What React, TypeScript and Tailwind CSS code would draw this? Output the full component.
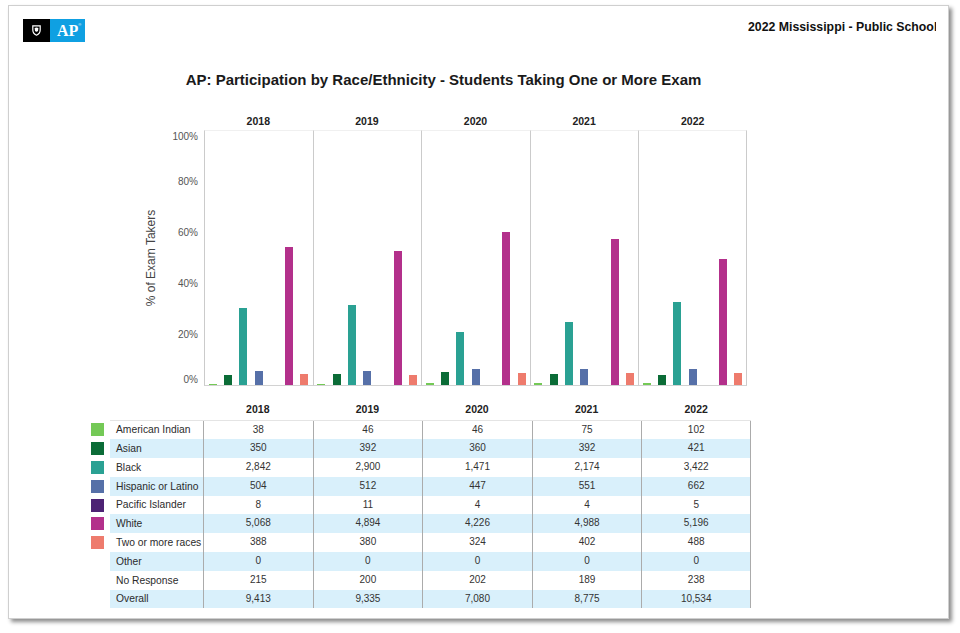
import React from "react";

const years = ["2018", "2019", "2020", "2021", "2022"];

const groups = [
  { name: "American Indian", bar: "bg-[#74c956]", values: [38, 46, 46, 75, 102] },
  { name: "Asian", bar: "bg-[#0b6c37]", values: [350, 392, 360, 392, 421] },
  { name: "Black", bar: "bg-[#2aa193]", values: [2842, 2900, 1471, 2174, 3422] },
  { name: "Hispanic or Latino", bar: "bg-[#5670a8]", values: [504, 512, 447, 551, 662] },
  { name: "Pacific Islander", bar: "bg-[#4d2274]", values: [8, 11, 4, 4, 5] },
  { name: "White", bar: "bg-[#b3308b]", values: [5068, 4894, 4226, 4988, 5196] },
  { name: "Two or more races", bar: "bg-[#ee7b6d]", values: [388, 380, 324, 402, 488] },
];

const otherRows = [
  { name: "Other", values: [0, 0, 0, 0, 0] },
  { name: "No Response", values: [215, 200, 202, 189, 238] },
];

const overall = [9413, 9335, 7080, 8775, 10534];

const rows = [...groups, ...otherRows, { name: "Overall", values: overall }];

const PLOT_H = 256;

function Logo() {
  return (
    <div className="flex h-[23px]">
      <div className="flex w-[27px] items-center justify-center bg-black">
        <svg width="9" height="11" viewBox="0 0 9 11">
          <path d="M0.8 0.8 H8.2 V5 Q8.2 8.6 4.5 10.2 Q0.8 8.6 0.8 5 Z" fill="none" stroke="#fff" strokeWidth="1.2" />
          <path d="M2.6 3 Q4.5 1.8 6.4 3 L6 6 Q4.5 7.6 3 6 Z" fill="#fff" />
        </svg>
      </div>
      <div className="flex w-[35px] items-start bg-[#0fa0e2] pl-[7px] pt-[2px]">
        <span className="font-['Liberation_Serif',serif] text-[16px] font-bold leading-[19px] text-white">AP</span>
        <span className="mt-[1px] font-['Liberation_Sans',sans-serif] text-[4px] leading-[5px] text-white">®</span>
      </div>
    </div>
  );
}

function Chart() {
  return (
    <div className="ml-[131px] mt-[26px] flex">
      {/* y axis title */}
      <div className="mt-[15px] flex h-[256px] w-[22px] items-center justify-center">
        <span className="-rotate-90 whitespace-nowrap text-[12px] leading-[14px] text-[#444]">% of Exam Takers</span>
      </div>
      {/* ticks */}
      <div className="relative mt-[15px] h-[256px] w-[36px] text-right text-[10px] leading-[13px] text-[#555]">
        <div className="absolute right-0 top-0">100%</div>
        <div className="absolute right-0 top-[45px]">80%</div>
        <div className="absolute right-0 top-[96px]">60%</div>
        <div className="absolute right-0 top-[147px]">40%</div>
        <div className="absolute right-0 top-[198px]">20%</div>
        <div className="absolute bottom-0 right-0">0%</div>
      </div>
      <div className="ml-[6px] flex">
        {years.map((y, yi) => (
          <div key={y} className="flex flex-col">
            <div className="h-[15px] w-[108.6px] text-center text-[10.5px] font-bold leading-[12px] text-[#222]">{y}</div>
            <div
              className={`flex h-[256px] w-[108.6px] items-end border-b border-t border-l-[1.5px] border-b-[#d2d2d2] border-l-[#cbcbcb] border-t-[#f0f0f0] ${
                yi === years.length - 1 ? "border-r-[1.5px] border-r-[#cbcbcb]" : ""
              }`}
            >
              {groups.map((g) => {
                const h = (g.values[yi] / overall[yi]) * PLOT_H;
                return (
                  <div key={g.name} className="flex w-[15.3px] justify-center">
                    {h >= 0.5 && <div className={`w-[8px] ${g.bar}`} style={{ height: `${h}px` }} />}
                  </div>
                );
              })}
            </div>
          </div>
        ))}
      </div>
    </div>
  );
}

function DataTable() {
  return (
    <div className="ml-[82px] mt-[14px] flex">
      {/* legend */}
      <div className="flex w-[19px] flex-col">
        <div className="h-[19.5px]" />
        {groups.map((g) => (
          <div key={g.name} className="flex h-[18.8px] items-center pt-[2px]">
            <div className={`h-[13px] w-[13px] ${g.bar}`} />
          </div>
        ))}
      </div>
      <div className="flex flex-col">
        <div className="flex h-[19.5px] items-center">
          <div className="w-[93px]" />
          {years.map((y) => (
            <div key={y} className="w-[109.6px] text-center text-[10.5px] font-bold text-[#222]">
              {y}
            </div>
          ))}
        </div>
        <div className="border-t border-[#e4e4e4]">
          {rows.map((r, ri) => (
            <div key={r.name} className={`flex h-[18.8px] ${ri % 2 === 1 ? "bg-[#d9f0fb]" : "bg-white"}`}>
              <div className="flex w-[93px] items-center overflow-hidden whitespace-nowrap pl-[6px] text-[10.3px] text-[#2b2b2b]">
                {r.name}
              </div>
              {r.values.map((v, vi) => (
                <div
                  key={vi}
                  className={`flex w-[109.6px] items-start justify-center border-l-[1.5px] border-[#ababab] pt-[1px] text-[10px] text-[#333] ${
                    vi === r.values.length - 1 ? "border-r-[1.5px]" : ""
                  }`}
                >
                  {v.toLocaleString("en-US")}
                </div>
              ))}
            </div>
          ))}
        </div>
      </div>
    </div>
  );
}

export default function App() {
  return (
    <div className="h-[633px] w-[960px] bg-white pl-[8px] pt-[5px] font-['Liberation_Sans',Arial,sans-serif]">
      <div className="h-[614px] w-[941px] border border-[#cfcfcf] bg-white shadow-[3px_3px_4px_rgba(0,0,0,0.45)]">
        {/* header */}
        <div className="flex items-start pl-[14px] pt-[13px]">
          <Logo />
          <div className="ml-auto mr-[12px] mt-[1px] w-[188px] overflow-hidden whitespace-nowrap text-[12.3px] font-bold leading-[14px] text-[#111]">
            2022 Mississippi - Public School
          </div>
        </div>

        <h1 className="ml-[131px] mt-[29px] w-[607px] text-center text-[15px] font-bold leading-[18px] text-[#1a1a1a]">
          AP: Participation by Race/Ethnicity - Students Taking One or More Exam
        </h1>

        <Chart />
        <DataTable />
      </div>
    </div>
  );
}
